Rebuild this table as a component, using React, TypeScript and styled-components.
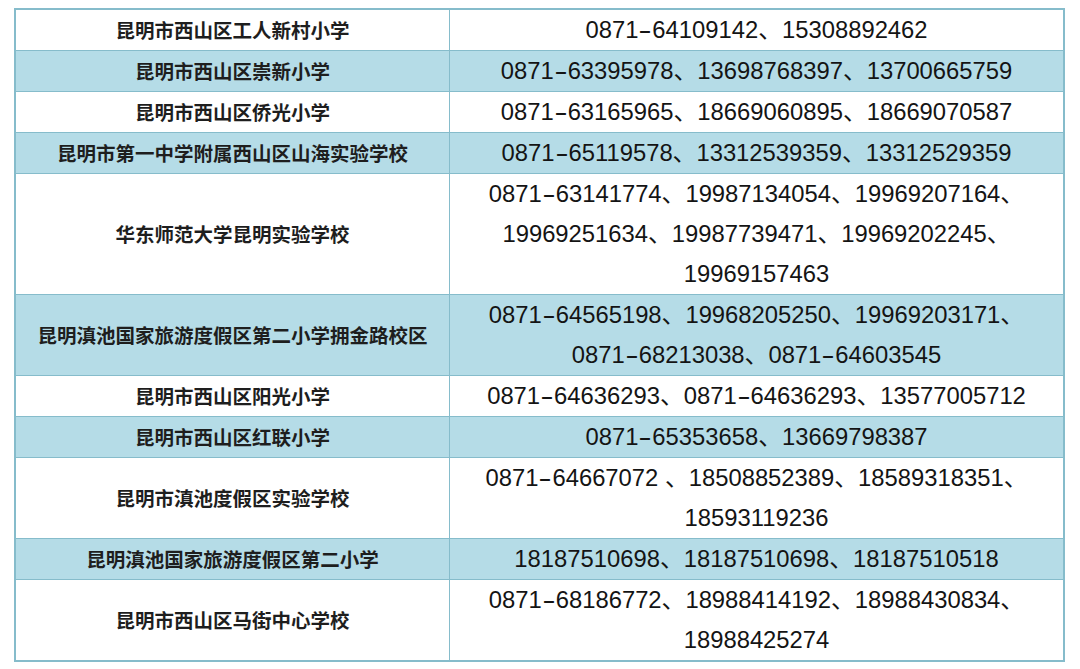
import React from "react";
import styled, { createGlobalStyle } from "styled-components";

const GlobalStyle = createGlobalStyle`
  body {
    margin: 0;
    background-color: #ffffff;
  }
`;

const Page = styled.div`
  padding: 8px 0 0 14px;
  width: 1080px;
  height: 669px;
  box-sizing: border-box;
  overflow: hidden;
`;

const Table = styled.table`
  width: 1051px;
  border-collapse: collapse;
  border: 2px solid #86bccb;
  table-layout: fixed;
`;

const Row = styled.tr<{ $shaded: boolean }>`
  background-color: ${(p) => (p.$shaded ? "#b5dce7" : "#ffffff")};
`;

const NameCell = styled.td`
  width: 433px;
  padding: 0;
  border: 1px solid #86bccb;
  text-align: center;
  line-height: 40px;
  font-family: "Noto Sans CJK SC", "Noto Sans", sans-serif;
  font-size: 19.5px;
  font-weight: 700;
  color: #1e1e1e;
  white-space: nowrap;
`;

const PhoneCell = styled.td`
  padding: 0;
  border: 1px solid #86bccb;
  text-align: center;
  line-height: 40px;
  font-family: "Liberation Sans", Arial, "Noto Sans CJK SC", sans-serif;
  font-size: 23.8px;
  color: #141414;
  white-space: nowrap;
`;

const Line = styled.div`
  height: 40px;
`;

const Dash = styled.span`
  display: inline-block;
  padding: 0 3px;
  transform: scaleX(1.7);
`;

const rows = [
  { name: "昆明市西山区工人新村小学", lines: ["0871-64109142、15308892462"] },
  { name: "昆明市西山区崇新小学", lines: ["0871-63395978、13698768397、13700665759"] },
  { name: "昆明市西山区侨光小学", lines: ["0871-63165965、18669060895、18669070587"] },
  { name: "昆明市第一中学附属西山区山海实验学校", lines: ["0871-65119578、13312539359、13312529359"] },
  {
    name: "华东师范大学昆明实验学校",
    lines: [
      "0871-63141774、19987134054、19969207164、",
      "19969251634、19987739471、19969202245、",
      "19969157463",
    ],
  },
  {
    name: "昆明滇池国家旅游度假区第二小学拥金路校区",
    lines: ["0871-64565198、19968205250、19969203171、", "0871-68213038、0871-64603545"],
  },
  { name: "昆明市西山区阳光小学", lines: ["0871-64636293、0871-64636293、13577005712"] },
  { name: "昆明市西山区红联小学", lines: ["0871-65353658、13669798387"] },
  {
    name: "昆明市滇池度假区实验学校",
    lines: ["0871-64667072 、18508852389、18589318351、", "18593119236"],
  },
  { name: "昆明滇池国家旅游度假区第二小学", lines: ["18187510698、18187510698、18187510518"] },
  {
    name: "昆明市西山区马街中心学校",
    lines: ["0871-68186772、18988414192、18988430834、", "18988425274"],
  },
];

const renderLine = (text: string) => {
  const parts = text.split("-");
  return parts.map((part, i) => (
    <React.Fragment key={i}>
      {i > 0 && <Dash>-</Dash>}
      {part}
    </React.Fragment>
  ));
};

const App = () => {
  return (
    <Page>
      <GlobalStyle />
      <Table>
        <tbody>
          {rows.map((row, idx) => (
            <Row key={idx} $shaded={idx % 2 === 1}>
              <NameCell>{row.name}</NameCell>
              <PhoneCell>
                {row.lines.map((line, i) => (
                  <Line key={i}>{renderLine(line)}</Line>
                ))}
              </PhoneCell>
            </Row>
          ))}
        </tbody>
      </Table>
    </Page>
  );
};

export default App;
